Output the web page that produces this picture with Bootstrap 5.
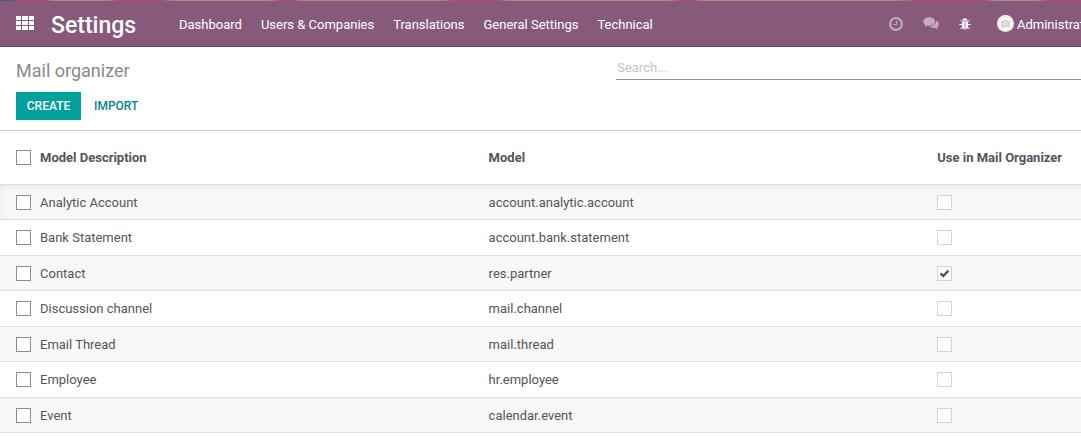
<!DOCTYPE html>
<html lang="en">
<head>
<meta charset="utf-8">
<meta name="viewport" content="width=device-width, initial-scale=1">
<title>Mail organizer - Settings</title>
<link href="https://cdn.jsdelivr.net/npm/bootstrap@5.3.0/dist/css/bootstrap.min.css" rel="stylesheet">
<style>
  body { font-family: Roboto, "Liberation Sans", sans-serif; font-size: 13px; color: #555; overflow-x: hidden; }
  .wallpaper { height: 1px; background: linear-gradient(90deg, #3f6187 0 1%, #bd4560 2% 4%, #a98b7d 5% 10%, #bd4560 11% 15%, #a98b7d 16% 25%, #bd4560 26% 27%, #b0857a 28% 41%, #bd4560 42% 46%, #a98b7d 47% 62%, #bd4560 63% 64%, #a98b7d 65% 83%, #bd4560 85% 91%, #a98b7d 92% 96%, #bd4560 97%); }
  .topbar { height: 46px; background: #875a7b; border-bottom: 1px solid #68465f; white-space: nowrap; overflow: hidden; }
  .topbar a { color: #fff; text-decoration: none; }
  .topbar svg { display: block; }
  .apps { margin-right: 17px; padding-bottom: 1px; }
  .app-name { font-size: 23px; font-weight: 500; line-height: 30px; padding-top: 4px; width: 128px; }
  .menu { gap: 19px; padding-top: 2px; }
  .topbar .dim { opacity: .5; }
  .systray { width: 192px; flex: none; gap: 20px; }
  .user { margin-left: 6px; }
  .user-name { padding-top: 2px; }
  .avatar { width: 17px; height: 17px; background: #f5f5f5; border-radius: 50%; margin-right: 3px; }
  .panel { border-bottom: 1px solid #c8c8c8; padding: 12px 0 10px; }
  .panel h1 { font-size: 18px; font-weight: 400; line-height: 24px; color: #8a8a8a; margin: 0 0 9px; }
  .panel .btn { --bs-btn-font-size: 12px; --bs-btn-font-weight: 500; --bs-btn-line-height: 18px; --bs-btn-padding-x: 9px; --bs-btn-padding-y: 4px; --bs-btn-border-radius: 0; }
  .actions { gap: 3px; }
  .btn-create { --bs-btn-bg: #00a09d; --bs-btn-border-color: #00a09d; --bs-btn-color: #fff; --bs-btn-hover-bg: #008784; --bs-btn-hover-color: #fff; min-width: 65px; }
  .btn-import { --bs-btn-color: #008784; --bs-btn-hover-color: #00605e; }
  .searchbox { flex: 0 0 43%; }
  .searchbox input { border: 0; border-bottom: 1px solid #8c8c8c; border-radius: 0; font-size: 13px; line-height: 20px; padding: 1px 1px 0; width: 100%; height: 25px; outline: 0; margin-top: -4px; display: block; }
  .searchbox input::placeholder { color: #c4c4c4; opacity: 1; }
  .records { table-layout: fixed; width: 100%; margin: 0; }
  .records > :not(caption) > * > * { padding: 8px 0 7px; line-height: 1.5; border-bottom: 1px solid #dfdfdf; box-shadow: none; vertical-align: middle; color: #555; }
  .records > thead > tr > th { padding: 17px 0 16px; font-weight: 700; }
  .records > tbody > tr:nth-child(odd) > td { background: #f8f8f8; }
  .records > tbody > tr:first-child > td { background: linear-gradient(#eee, #f8f8f8 8px); }
  .records > tbody > tr:first-child > td:first-child { background: linear-gradient(90deg, rgba(0, 0, 0, .03), transparent 6px), linear-gradient(#eee, #f8f8f8 8px); }
  .records > * > tr > :first-child { padding-left: 16px; }
  .pick-col { width: 40px; }
  .text-col { width: 41.5%; }
  .tick { appearance: none; display: block; width: 15px; height: 15px; margin: 0; border: 1px solid #8c8c8c; background: #fff; }
  .tick:disabled { border-color: #d4d4d4; }
  .tick:checked { background: #fff url("data:image/svg+xml,%3Csvg xmlns='http://www.w3.org/2000/svg' viewBox='0 0 13 13'%3E%3Cpath d='M2.5 6.5 5.2 9 10.5 3.700' fill='none' stroke='%23555' stroke-width='2.4'/%3E%3C/svg%3E"); }
</style>
</head>
<body>
<div class="wallpaper"></div>
<header class="topbar d-flex align-items-center ps-3">
  <a href="#" class="apps" aria-label="Applications">
    <svg width="18" height="14" viewBox="0 0 18 14" fill="#fff"><path d="M0 0h5v4H0zM6 0h6v4H6zM13 0h5v4h-5zM0 5h5v4H0zM6 5h6v4H6zM13 5h5v4h-5zM0 10h5v4H0zM6 10h6v4H6zM13 10h5v4h-5z"/></svg>
  </a>
  <a href="#" class="app-name">Settings</a>
  <nav class="menu d-flex me-auto">
    <a href="#">Dashboard</a>
    <a href="#">Users &amp; Companies</a>
    <a href="#">Translations</a>
    <a href="#">General Settings</a>
    <a href="#">Technical</a>
  </nav>
  <div class="systray d-flex align-items-center">
    <a href="#" class="dim" aria-label="Activities"><svg width="14" height="14" viewBox="0 0 14 14" fill="none" stroke="#fff"><circle cx="7" cy="7" r="5.900" stroke-width="2"/><path d="M7.500 3.500v4H4.500" stroke-width="1.200"/></svg></a>
    <a href="#" class="dim" aria-label="Conversations"><svg width="16" height="13" viewBox="0 0 16 13" fill="#fff"><path d="M6.200.3C2.900.3.2 2.200.2 4.600c0 1.300.8 2.500 2.100 3.300-.2.700-.6 1.100-1.100 1.700 1.300-.1 2.400-.5 3.300-1.100l1.700.2c3.300 0 6-1.800 6-4.100S9.500.3 6.200.3z"/><path d="M13.100 3.600c.3 3.300-2.700 5.800-6.600 6 1 .9 2.500 1.400 4.300 1.400l1.200-.1c.9.700 2.200 1.100 3.400 1.200-.5-.5-.9-1-1.100-1.700 2.400-1.600 2.100-5.100-1.200-6.800z"/></svg></a>
    <a href="#" aria-label="Debug"><svg width="12" height="12" viewBox="0 0 12 12" fill="#fff"><path d="M3.500 2.700a2.500 2.500 0 0 1 5 0zM3 3.500h6v5.200C9 10.300 8 11.300 6.400 11.500V4.600h-.8v6.900C4 11.300 3 10.300 3 8.700z"/><path d="M1.500 2.200 3.500 4M10.500 2.200 8.500 4M.3 6.600H3M9 6.600h2.700M3.500 9 1.500 11M8.500 9l2 2" stroke="#fff" fill="none"/></svg></a>
    <a href="#" class="user d-flex align-items-center"><span class="avatar"><svg width="17" height="17" viewBox="0 0 17 17"><circle cx="8.500" cy="8.500" r="7" fill="none" stroke="#e5e5e5" stroke-width=".5"/><path d="M4.500 6h2l.8-1h2.400l.8 1h2v6h-8z" fill="#cfcfcf"/><circle cx="8.500" cy="8.800" r="1.700" fill="none" stroke="#f5f5f5"/></svg></span><span class="user-name">Administrator</span></a>
  </div>
</header>
<main>
  <section class="panel d-flex">
    <div class="flex-grow-1 ps-3">
      <h1>Mail organizer</h1>
      <div class="actions d-flex"><button type="button" class="btn btn-create">CREATE</button><button type="button" class="btn btn-import">IMPORT</button></div>
    </div>
    <div class="searchbox"><input type="search" placeholder="Search..." aria-label="Search"></div>
  </section>
  <table class="table records">
    <colgroup><col class="pick-col"><col class="text-col"><col class="text-col"><col></colgroup>
    <thead><tr><th><input type="checkbox" class="tick" aria-label="Select all"></th><th>Model Description</th><th>Model</th><th>Use in Mail Organizer</th></tr></thead>
    <tbody>
      <tr><td><input type="checkbox" class="tick" aria-label="Select Analytic Account"></td><td>Analytic Account</td><td>account.analytic.account</td><td><input type="checkbox" class="tick" disabled aria-label="Use Analytic Account"></td></tr>
      <tr><td><input type="checkbox" class="tick" aria-label="Select Bank Statement"></td><td>Bank Statement</td><td>account.bank.statement</td><td><input type="checkbox" class="tick" disabled aria-label="Use Bank Statement"></td></tr>
      <tr><td><input type="checkbox" class="tick" aria-label="Select Contact"></td><td>Contact</td><td>res.partner</td><td><input type="checkbox" class="tick" disabled checked aria-label="Use Contact"></td></tr>
      <tr><td><input type="checkbox" class="tick" aria-label="Select Discussion channel"></td><td>Discussion channel</td><td>mail.channel</td><td><input type="checkbox" class="tick" disabled aria-label="Use Discussion channel"></td></tr>
      <tr><td><input type="checkbox" class="tick" aria-label="Select Email Thread"></td><td>Email Thread</td><td>mail.thread</td><td><input type="checkbox" class="tick" disabled aria-label="Use Email Thread"></td></tr>
      <tr><td><input type="checkbox" class="tick" aria-label="Select Employee"></td><td>Employee</td><td>hr.employee</td><td><input type="checkbox" class="tick" disabled aria-label="Use Employee"></td></tr>
      <tr><td><input type="checkbox" class="tick" aria-label="Select Event"></td><td>Event</td><td>calendar.event</td><td><input type="checkbox" class="tick" disabled aria-label="Use Event"></td></tr>
    </tbody>
  </table>
</main>
<script src="https://cdn.jsdelivr.net/npm/bootstrap@5.3.0/dist/js/bootstrap.bundle.min.js"></script>
</body>
</html>
